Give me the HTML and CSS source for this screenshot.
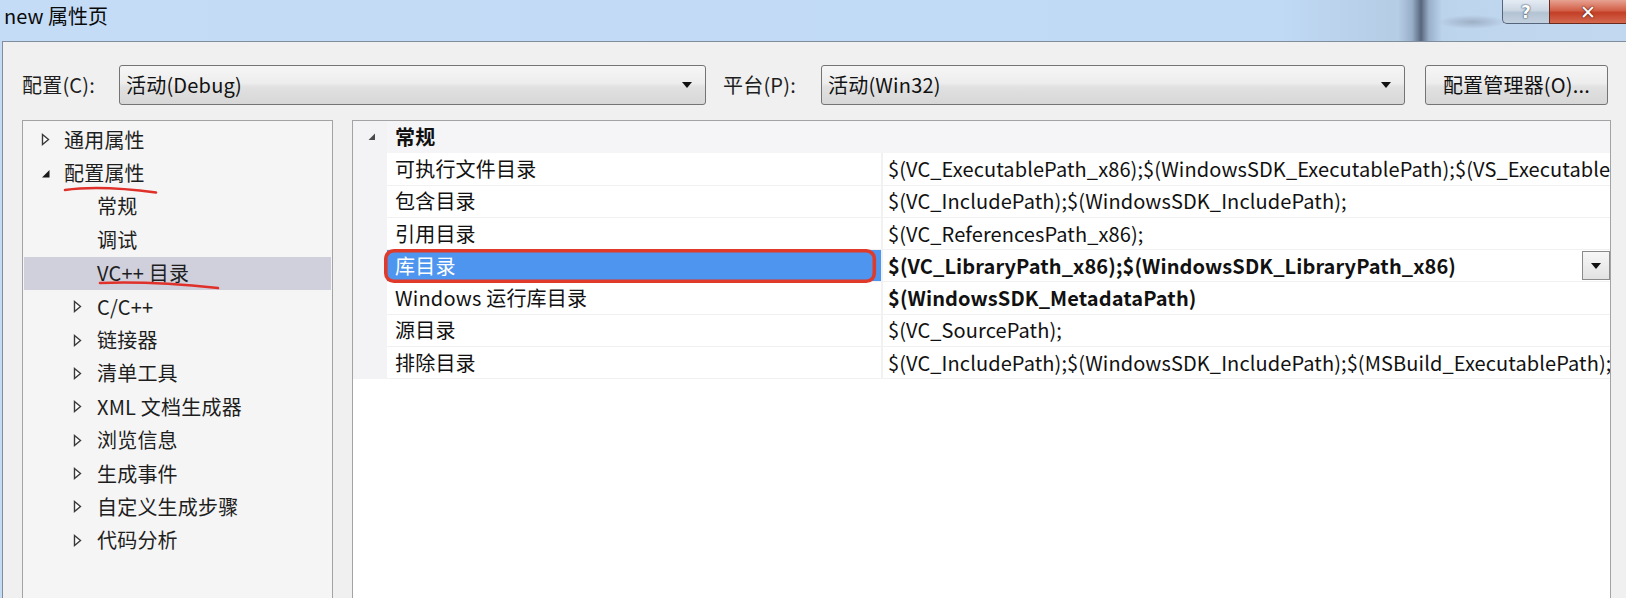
FILE: index.html
```html
<!DOCTYPE html>
<html lang="zh-CN">
<head>
<meta charset="utf-8">
<title>new 属性页</title>
<link rel="stylesheet" href="styles.css">
</head>
<body>
<div class="titlebar">
  <span class="title">new 属性页</span>
  <div class="caption">
    <div class="cap cap-help">?</div>
    <div class="cap cap-close">✕</div>
  </div>
</div>
<div class="window">
  <div class="toolbar">
    <span class="lbl lbl-config">配置(C):</span>
    <div class="combo combo-config"><span class="combo-text">活动(Debug)</span><i class="arrow"></i></div>
    <span class="lbl lbl-platform">平台(P):</span>
    <div class="combo combo-platform"><span class="combo-text">活动(Win32)</span><i class="arrow"></i></div>
    <button class="btn">配置管理器(O)...</button>
  </div>
  <div class="main">
    <div class="tree">
      <div class="trow l1"><svg class="tw" width="9" height="13" viewBox="0 0 9 13"><path d="M1.5 1.5 L7.5 6.5 L1.5 11.5 Z" fill="#fff" stroke="#3a3a3a" stroke-width="1.4"/></svg><span>通用属性</span></div>
      <div class="trow l1"><svg class="tw" width="9" height="13" viewBox="0 0 9 13"><path d="M8.5 3 L8.5 10.5 L1 10.5 Z" fill="#1a1a1a"/></svg><span>配置属性</span></div>
      <div class="trow leaf"><span>常规</span></div>
      <div class="trow leaf"><span>调试</span></div>
      <div class="trow leaf sel"><span>VC++ 目录</span></div>
      <div class="trow l2"><svg class="tw" width="9" height="13" viewBox="0 0 9 13"><path d="M1.5 1.5 L7.5 6.5 L1.5 11.5 Z" fill="#fff" stroke="#3a3a3a" stroke-width="1.4"/></svg><span>C/C++</span></div>
      <div class="trow l2"><svg class="tw" width="9" height="13" viewBox="0 0 9 13"><path d="M1.5 1.5 L7.5 6.5 L1.5 11.5 Z" fill="#fff" stroke="#3a3a3a" stroke-width="1.4"/></svg><span>链接器</span></div>
      <div class="trow l2"><svg class="tw" width="9" height="13" viewBox="0 0 9 13"><path d="M1.5 1.5 L7.5 6.5 L1.5 11.5 Z" fill="#fff" stroke="#3a3a3a" stroke-width="1.4"/></svg><span>清单工具</span></div>
      <div class="trow l2"><svg class="tw" width="9" height="13" viewBox="0 0 9 13"><path d="M1.5 1.5 L7.5 6.5 L1.5 11.5 Z" fill="#fff" stroke="#3a3a3a" stroke-width="1.4"/></svg><span>XML 文档生成器</span></div>
      <div class="trow l2"><svg class="tw" width="9" height="13" viewBox="0 0 9 13"><path d="M1.5 1.5 L7.5 6.5 L1.5 11.5 Z" fill="#fff" stroke="#3a3a3a" stroke-width="1.4"/></svg><span>浏览信息</span></div>
      <div class="trow l2"><svg class="tw" width="9" height="13" viewBox="0 0 9 13"><path d="M1.5 1.5 L7.5 6.5 L1.5 11.5 Z" fill="#fff" stroke="#3a3a3a" stroke-width="1.4"/></svg><span>生成事件</span></div>
      <div class="trow l2"><svg class="tw" width="9" height="13" viewBox="0 0 9 13"><path d="M1.5 1.5 L7.5 6.5 L1.5 11.5 Z" fill="#fff" stroke="#3a3a3a" stroke-width="1.4"/></svg><span>自定义生成步骤</span></div>
      <div class="trow l2"><svg class="tw" width="9" height="13" viewBox="0 0 9 13"><path d="M1.5 1.5 L7.5 6.5 L1.5 11.5 Z" fill="#fff" stroke="#3a3a3a" stroke-width="1.4"/></svg><span>代码分析</span></div>
    </div>
    <div class="grid">
      <div class="grow ghead">
        <div class="gutter"><svg width="8" height="8" viewBox="0 0 8 8"><path d="M7 0.5 L7 7 L0.5 7 Z" fill="#4a4a4a"/></svg></div>
        <div class="gcat">常规</div>
      </div>
      <div class="grow"><div class="gutter"></div><div class="gname">可执行文件目录</div><div class="gval">$(VC_ExecutablePath_x86);$(WindowsSDK_ExecutablePath);$(VS_Executable</div></div>
      <div class="grow"><div class="gutter"></div><div class="gname">包含目录</div><div class="gval">$(VC_IncludePath);$(WindowsSDK_IncludePath);</div></div>
      <div class="grow"><div class="gutter"></div><div class="gname">引用目录</div><div class="gval">$(VC_ReferencesPath_x86);</div></div>
      <div class="grow gsel"><div class="gutter"></div><div class="gname">库目录</div><div class="gval bold"><span class="vtext">$(VC_LibraryPath_x86);$(WindowsSDK_LibraryPath_x86)</span><span class="ddbtn"><i class="ddarrow"></i></span></div></div>
      <div class="grow"><div class="gutter"></div><div class="gname">Windows 运行库目录</div><div class="gval bold">$(WindowsSDK_MetadataPath)</div></div>
      <div class="grow"><div class="gutter"></div><div class="gname">源目录</div><div class="gval">$(VC_SourcePath);</div></div>
      <div class="grow"><div class="gutter"></div><div class="gname">排除目录</div><div class="gval">$(VC_IncludePath);$(WindowsSDK_IncludePath);$(MSBuild_ExecutablePath);</div></div>
    </div>
  </div>
</div>
<svg class="annot" width="1626" height="598" viewBox="0 0 1626 598">
  <path d="M65 190 Q100 185 156 192.5" fill="none" stroke="#e0302a" stroke-width="2.6" stroke-linecap="round"/>
  <path d="M100 283 Q150 281 218 288" fill="none" stroke="#e0302a" stroke-width="2.6" stroke-linecap="round"/>
  <rect x="385.8" y="250.8" width="488.5" height="30.5" rx="8" fill="none" stroke="#e03a2b" stroke-width="3.6"/>
</svg>
</body>
</html>
```
FILE: styles.css
```css
* { box-sizing: border-box; }
html, body { margin: 0; padding: 0; }
body {
  width: 1626px;
  height: 598px;
  overflow: hidden;
  position: relative;
  background: #c3dbf4;
  font-family: "Noto Sans CJK SC", "Noto Sans", sans-serif;
  font-size: 20px;
  letter-spacing: 0.2px;
  color: #1b1b1b;
}

/* ---------- title bar ---------- */
.titlebar {
  height: 41px;
  display: flex;
  align-items: flex-start;
  background:
    radial-gradient(ellipse 34px 7px at 1472px 22px, rgba(95,105,120,.35), rgba(95,105,120,0)),
    linear-gradient(90deg, rgba(60,80,110,0) 1398px, rgba(70,90,120,.28) 1412px, rgba(35,45,65,.65) 1421px, rgba(70,90,120,.28) 1429px, rgba(60,80,110,0) 1442px),
    linear-gradient(90deg, #c4dcf6 0, #c0d9f4 1280px, #b6cde6 1390px, #bed5ee 1460px, #c2d8f0 1626px);
}
.title {
  font-size: 20px;
  line-height: 24px;
  margin: 4px 0 0 4px;
  letter-spacing: 0;
  color: #0a0a0a;
}
.caption {
  margin-left: auto;
  display: flex;
  height: 24px;
}
.cap {
  height: 24px;
  display: flex;
  align-items: center;
  justify-content: center;
  font-family: "DejaVu Sans", sans-serif;
  font-weight: bold;
  color: #fff;
}
.cap-help {
  width: 47px;
  border: 1px solid #55667c;
  border-top: 0;
  border-right: 0;
  border-radius: 0 0 0 5px;
  background: linear-gradient(#e4ebf3, #ccd7e3 45%, #b4c3d3 55%, #c3d0de);
  font-size: 17px;
  text-shadow: 0 0 2px #33465e, 0 0 1px #33465e;
}
.cap-close {
  width: 77px;
  border-bottom: 1px solid #6b2a1e;
  border-left: 1px solid #6b2a1e;
  background: linear-gradient(#e7a292, #d26048 45%, #c33f26 55%, #d4694f);
  font-size: 19px;
  text-shadow: 0 0 2px #5a1a10, 0 0 1px #5a1a10;
}

/* ---------- window body ---------- */
.window {
  margin-left: 2px;
  height: 557px;
  border-top: 1px solid #808d9d;
  border-left: 1px solid #808d9d;
  background: #f0f0f0;
  padding-left: 19px;
}
.toolbar {
  display: flex;
  align-items: center;
  height: 40px;
  margin-top: 23px;
}
.lbl {
  flex: none;
  line-height: 24px;
  color: #1e1e1e;
}
.lbl-config { width: 97px; }
.lbl-platform { width: 98px; margin-left: 17px; }
.combo {
  flex: none;
  height: 40px;
  border: 1px solid #747474;
  border-radius: 3px;
  background: linear-gradient(#f6f6f6, #ededed 45%, #e1e1e1 55%, #d7d7d7);
  display: flex;
  align-items: center;
  padding: 0 13px 0 6px;
}
.combo-config { width: 587px; }
.combo-platform { width: 584px; }
.combo-text { flex: 1; line-height: 24px; color: #111; }
.arrow {
  width: 0;
  height: 0;
  border-left: 5px solid transparent;
  border-right: 5px solid transparent;
  border-top: 6px solid #111;
}
.btn {
  flex: none;
  margin-left: 20px;
  width: 183px;
  height: 40px;
  border: 1px solid #747474;
  border-radius: 3px;
  background: linear-gradient(#f6f6f6, #ededed 45%, #e1e1e1 55%, #d7d7d7);
  font: inherit;
  letter-spacing: inherit;
  color: #111;
  line-height: 24px;
  padding: 0;
}

.main {
  display: flex;
  margin-top: 15px;
  gap: 19px;
}

/* ---------- tree ---------- */
.tree {
  flex: none;
  width: 311px;
  height: 480px;
  border: 1px solid #a3a3a3;
  background: #f5f5f5;
  padding-top: 2px;
}
.trow {
  height: 33.4px;
  display: flex;
  align-items: center;
  line-height: 24px;
  color: #1e1e1e;
}
.trow .tw { flex: none; }
.trow.l1 { padding-left: 18px; }
.trow.l1 .tw { margin-right: 14px; }
.trow.l2 { padding-left: 50px; }
.trow.l2 .tw { margin-right: 15px; }
.trow.leaf { padding-left: 74px; }
.trow.sel { background: #d0d0dc; margin: 0 1px; padding-left: 73px; }

/* ---------- property grid ---------- */
.grid {
  flex: none;
  width: 1259px;
  height: 480px;
  border: 1px solid #a3a3a3;
  background: #fff;
  overflow: hidden;
}
.grow {
  display: flex;
  height: 32.3px;
  background: #f1f1f1;
  line-height: 24px;
  color: #111;
}
.gutter {
  flex: none;
  width: 34px;
  background: #f3f3f5;
  display: flex;
  align-items: center;
  padding-left: 15px;
}
.ghead { background: #f5f5f7; }
.gcat {
  font-weight: bold;
  padding-left: 8px;
  display: flex;
  align-items: center;
}
.gname {
  flex: none;
  width: 494px;
  height: calc(100% - 1px);
  background: #fff;
  padding-left: 8px;
  display: flex;
  align-items: center;
  white-space: nowrap;
}
.gval {
  flex: 1;
  min-width: 0;
  height: calc(100% - 1px);
  margin-left: 2px;
  background: #fff;
  padding-left: 5px;
  display: flex;
  align-items: center;
  white-space: nowrap;
  overflow: hidden;
  letter-spacing: 0.1px;
}
.gval.bold { font-weight: bold; }
.gsel .gname { background: #4d95ee; color: #fff; }
.vtext { flex: none; }
.ddbtn {
  margin-left: auto;
  flex: none;
  width: 28px;
  height: 29px;
  border: 1px solid #8a8a8a;
  background: linear-gradient(#f7f7f7, #e2e2e2);
  display: flex;
  align-items: center;
  justify-content: center;
}
.ddarrow {
  width: 0;
  height: 0;
  border-left: 5px solid transparent;
  border-right: 5px solid transparent;
  border-top: 6px solid #111;
}

/* ---------- annotations over the screenshot ---------- */
.annot {
  position: absolute;
  left: 0;
  top: 0;
  pointer-events: none;
}
```
